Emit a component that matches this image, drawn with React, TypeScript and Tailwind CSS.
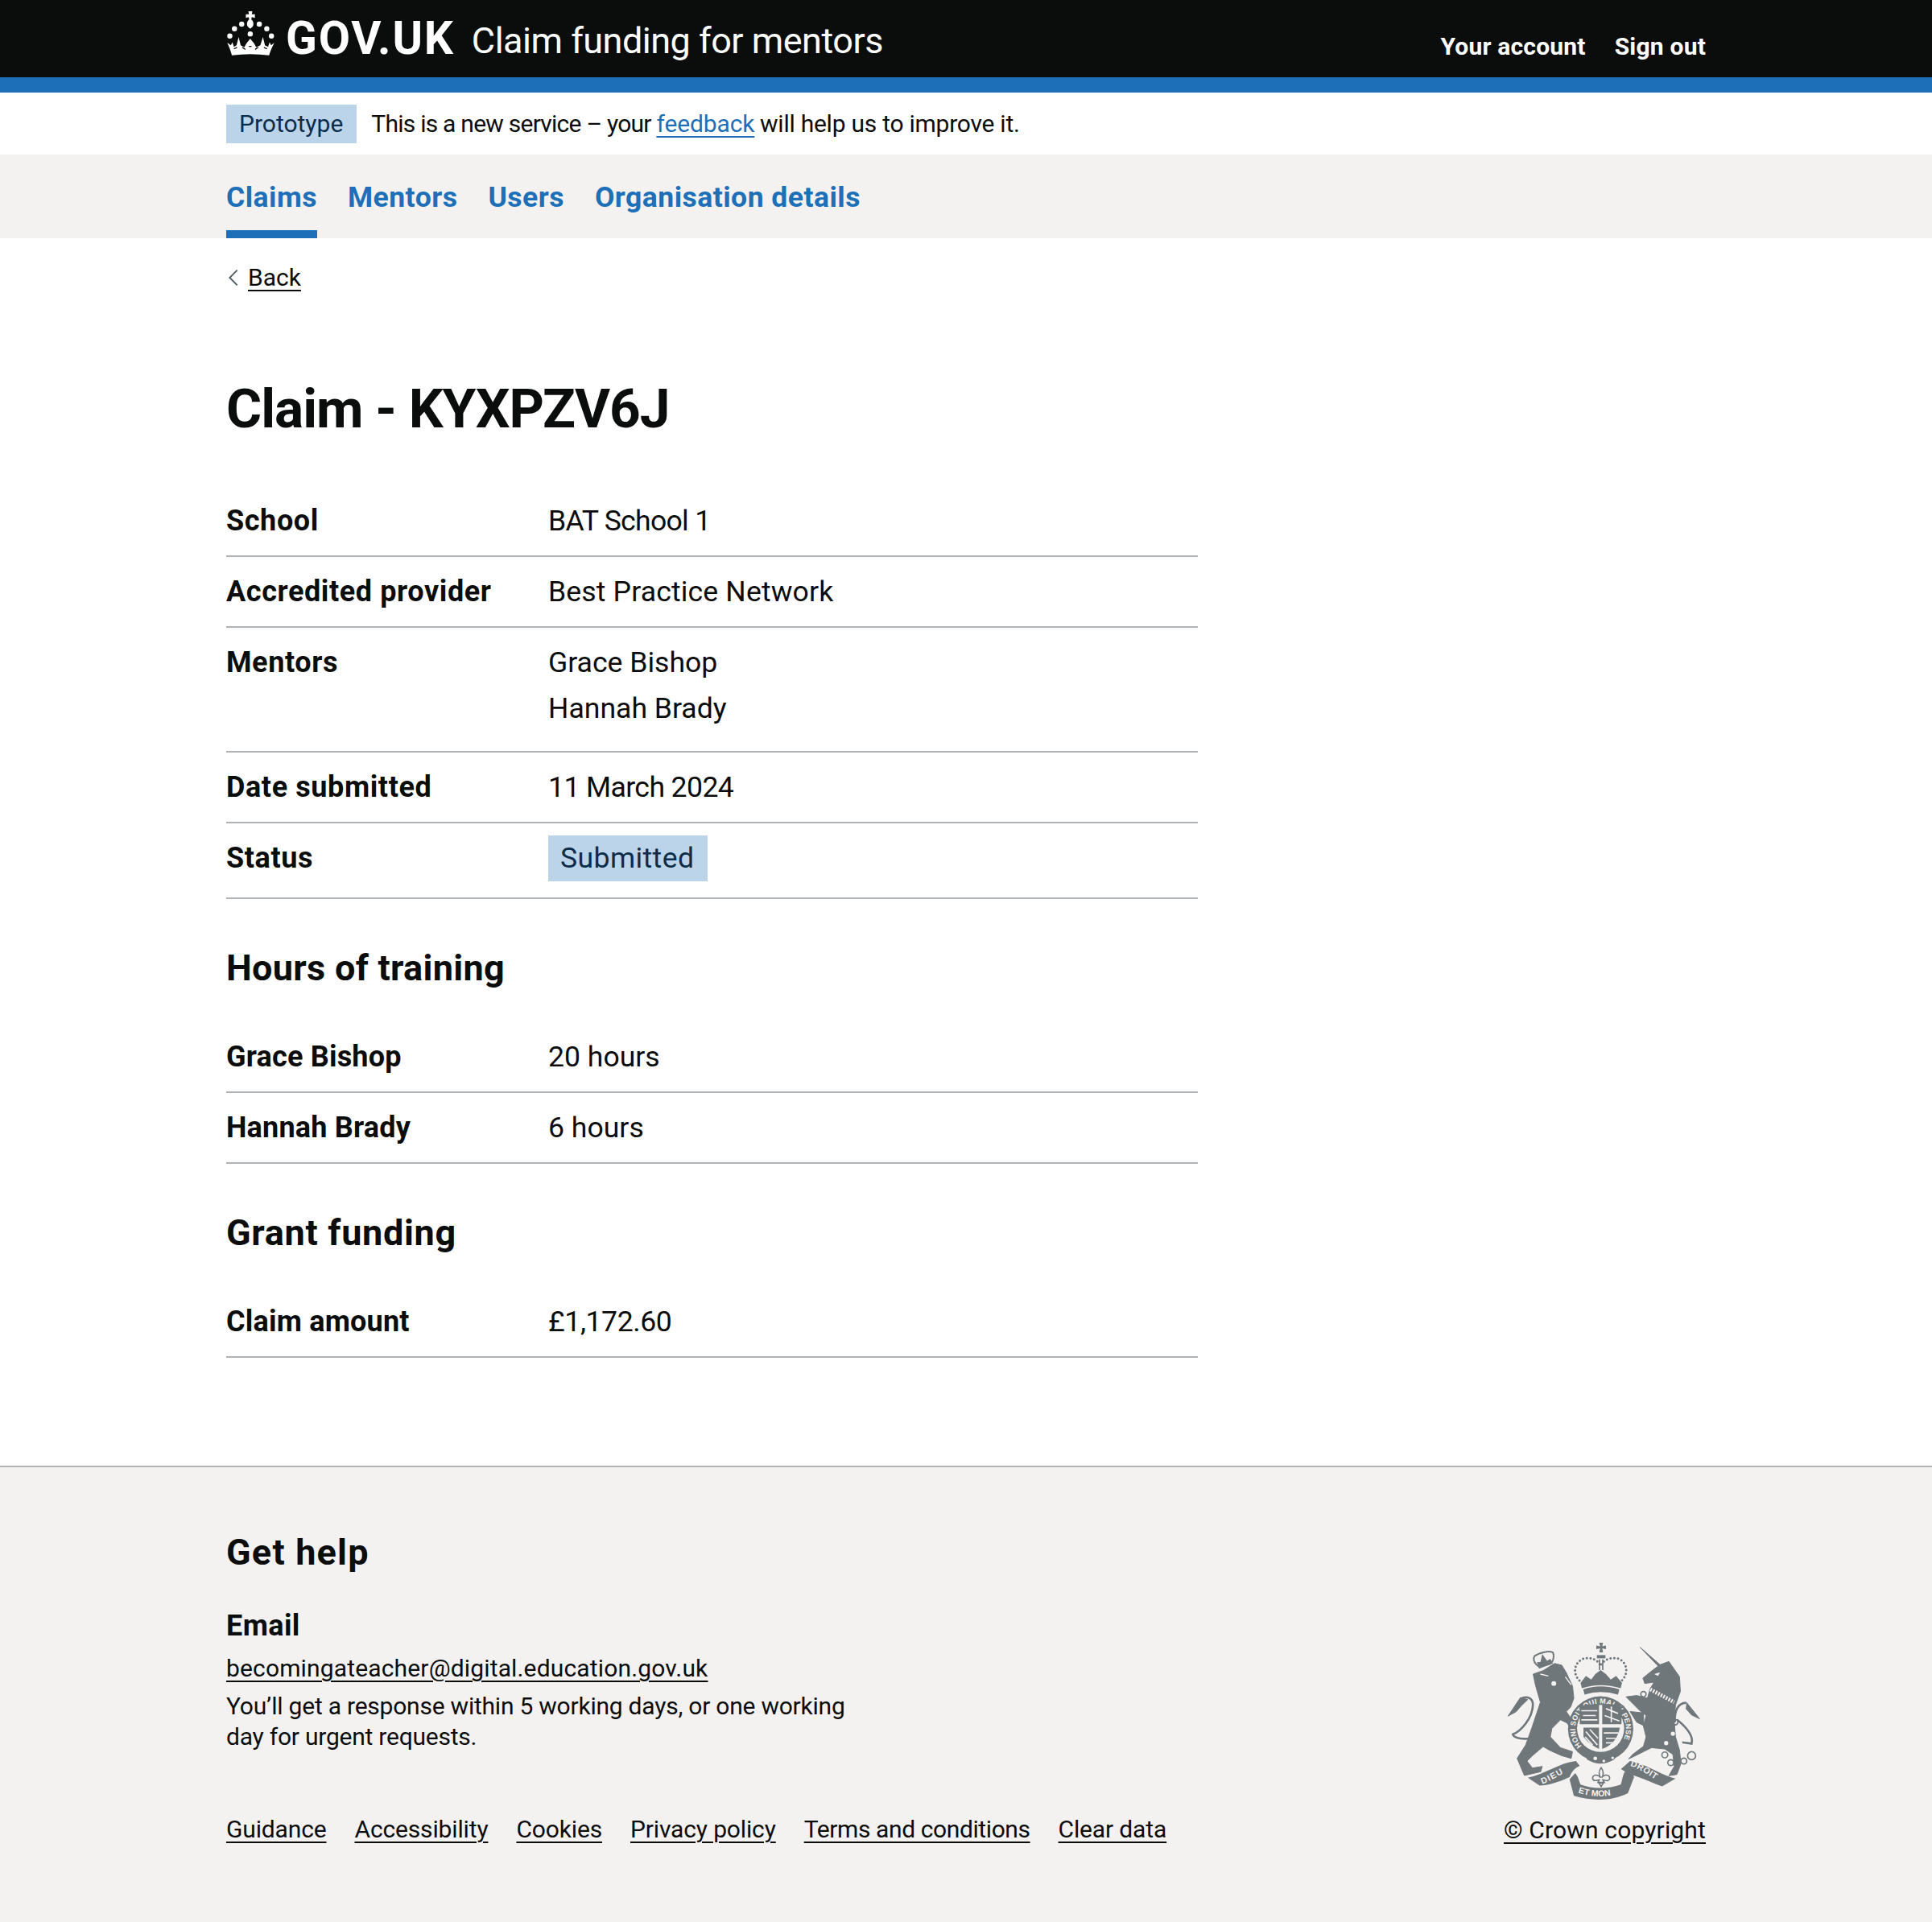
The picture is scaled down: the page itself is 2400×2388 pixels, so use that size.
const rowClass = 'flex border-b-2 border-[#b1b4b6] py-[19.5px] text-[35.6px] leading-[47px]';

function Crown() {
  return (
    <svg viewBox="30 38 190 176" className="w-[61px] h-[57px] mr-[13px] self-start mt-[-4px]" fill="currentColor">
      <path d="M116 40 H131 L129 52 H141 V66 L129 63 L127 72 C136 78 138 92 132 100 L123 108 L114 100 C108 92 110 78 119 72 L117 63 L106 66 V52 L118 52 Z" />
      <circle cx="90" cy="90" r="10" />
      <circle cx="158" cy="90" r="10" />
      <circle cx="62" cy="108" r="10" />
      <circle cx="187" cy="108" r="10" />
      <circle cx="44" cy="136" r="10" />
      <circle cx="205" cy="136" r="10" />
      <circle cx="123" cy="128" r="10" />
      <path d="M34 162 L48 172 L54 160 L60 178 L70 172 L78 140 L86 172 L100 180 L108 165 L123 146 L138 165 L146 180 L162 172 L172 140 L180 172 L192 178 L198 160 L204 172 L216 162 C208 180 200 195 196 211 Q123 201 52 211 C48 195 42 180 34 162 Z" />
      <path d="M60 186 L72 180 M92 180 L104 188 M142 188 L154 180 M176 180 L188 186 M118 176 L128 176" stroke="#0b0c0c" strokeWidth="4" fill="none" />
    </svg>
  );
}

// royal arms, traced by hand from the 3x crop
function RoyalArms() {
  const ink = '#6f777b';
  const paper = '#f3f2f1';
  return (
    <svg viewBox="100 85 725 595" className="w-[241px] h-[198px]">
      <defs>
        <path id="garter" d="M386 480 A95 95 0 1 1 514 480" />
        <path id="motto-left" d="M232 616 C275 600 305 575 345 560" />
        <path id="motto-mid" d="M366 648 C420 668 490 668 536 640" />
        <path id="motto-right" d="M560 548 C600 560 640 590 680 616" />
      </defs>

      {/* lion */}
      <g fill={ink} stroke={ink} strokeWidth="3" strokeLinejoin="round">
        <path d="M198 205 L235 192 L278 165 L305 172 L322 200 L345 250 L350 295 L338 328 L322 345 L355 395 L365 428 L345 422 L325 388 L300 376 L268 408 L262 440 L300 480 L345 495 L340 520 L305 510 L260 490 L235 476 L195 510 L175 530 L195 556 L232 550 L226 570 L165 584 L138 520 L170 470 L195 400 L225 310 L213 270 L205 240 Z" />
        <path d="M150 293 L104 362 L135 345 L152 325 L178 300 Z" />
      </g>
      <path d="M192 445 C160 450 125 445 122 430 C150 420 195 372 197 320 C197 292 172 285 150 298" fill="none" stroke={ink} strokeWidth="8" />
      <circle cx="275" cy="240" r="9" fill={paper} />
      <path d="M225 205 L255 212 M318 215 L340 245" stroke={paper} strokeWidth="4" />
      {/* lion crown */}
      <path d="M222 178 C205 170 195 150 203 138 C220 125 262 115 272 125 C278 140 272 160 262 166 Z" fill="none" stroke={ink} strokeWidth="7" strokeDasharray="2 6" strokeLinecap="round" />
      <path d="M220 185 L272 165 L262 148 L250 155 L232 130 L225 160 L212 160 Z" fill={ink} />

      {/* unicorn */}
      <g fill={ink} stroke={ink} strokeWidth="3" strokeLinejoin="round">
        <path d="M598 105 L672 170 L705 158 L745 215 L748 270 L730 320 L725 380 L730 440 L745 490 L750 540 L735 580 L705 585 L725 550 L720 505 L690 485 L640 480 L590 505 L555 522 L570 505 L610 475 L620 440 L610 400 L620 360 L600 345 L575 320 L545 290 L585 285 L625 295 L635 260 L650 235 L615 240 L608 220 L645 190 L665 175 Z" />
        <path d="M560 345 L610 350 L612 398 L585 385 Z" />
        <path d="M772 312 L820 372 L790 358 L770 335 Z" />
      </g>
      <path d="M728 385 C725 350 735 312 770 312 M735 375 C760 395 800 430 790 465 L755 460" fill="none" stroke={ink} strokeWidth="8" />
      <path d="M636 262 L725 310" stroke={paper} strokeWidth="14" strokeDasharray="6 5" />
      <g fill={paper}>
        <circle cx="720" cy="428" r="8" />
        <circle cx="695" cy="463" r="8" />
        <path d="M650 205 L672 198 L665 212 Z" />
      </g>
      <g fill="none" stroke={ink} strokeWidth="5">
        <circle cx="690" cy="507" r="11" />
        <circle cx="712" cy="536" r="11" />
        <circle cx="761" cy="530" r="11" />
        <circle cx="790" cy="510" r="15" />
        <circle cx="729" cy="385" r="10" />
        <circle cx="610" cy="280" r="10" />
      </g>

      {/* garter and shield */}
      <circle cx="450" cy="410" r="122" fill={ink} />
      <text fontFamily="Liberation Sans, sans-serif" fontSize="27" fontWeight="700" fill={paper} letterSpacing="1">
        <textPath href="#garter" startOffset="2%">HONI SOIT QUI MAL Y PENSE</textPath>
      </text>
      <circle cx="450" cy="408" r="88" fill={paper} />
      <g fill={ink}>
        <path d="M372 392 L372 326 Q410 312 444 320 L444 392 Z" />
        <path d="M456 320 Q495 312 528 326 L528 392 L456 392 Z" />
        <path d="M386 405 L444 405 L444 485 Q410 470 386 440 Z" />
        <path d="M456 405 L522 405 Q510 465 456 485 Z" />
      </g>
      <g stroke={paper} strokeWidth="5" fill="none">
        <path d="M378 342 L438 342 M384 360 L432 360 M378 376 L438 376" />
        <path d="M470 334 L515 352 M465 360 L520 380 M490 326 L490 385" />
        <path d="M395 420 L438 470 M410 412 L440 445 M392 440 L420 470" />
        <path d="M462 425 L516 425 M470 445 L506 445 M470 462 L495 462" />
      </g>
      <path d="M385 500 Q450 560 520 500 L500 525 Q450 555 400 525 Z" fill={ink} />
      <g fill={paper}>
        <circle cx="430" cy="520" r="7" />
        <circle cx="462" cy="530" r="5" />
        <circle cx="495" cy="518" r="5" />
      </g>

      {/* crown */}
      <path d="M382 238 C345 215 345 165 385 148 C410 140 440 150 450 175 C460 150 490 140 518 148 C555 165 555 215 518 238" fill="none" stroke={ink} strokeWidth="9" strokeDasharray="0 14" strokeLinecap="round" />
      <path d="M375 238 L395 212 L415 225 L430 205 L450 190 L470 205 L488 225 L508 212 L530 238 L525 258 Q450 235 380 258 Z" fill={ink} />
      <path d="M385 262 Q450 240 520 262 L515 282 Q450 262 390 282 Z" fill={ink} />
      <path d="M446 150 L446 190 M458 150 L458 190" stroke={ink} strokeWidth="5" />
      <path d="M445 88 L459 88 L456 101 L470 98 L470 112 L456 109 L459 124 L445 124 L448 109 L434 112 L434 98 L448 101 Z" fill={ink} />
      <rect x="436" y="134" width="32" height="12" fill={ink} />

      {/* motto ribbon */}
      <g fill={ink}>
        <path d="M178 592 L222 622 C275 618 310 600 334 590 C345 565 355 555 372 548 L358 530 C300 535 240 580 178 592 Z" />
        <path d="M334 598 L350 660 C420 680 490 680 552 650 L575 590 C570 575 555 568 540 570 C530 590 530 610 525 618 C480 635 420 635 375 618 C370 605 365 585 355 575 Z" />
        <path d="M526 560 L560 530 C620 540 680 585 730 595 L680 625 C640 610 600 590 560 580 Z" />
      </g>
      <g fontFamily="Liberation Sans, sans-serif" fontSize="32" fontWeight="700" fill={paper}>
        <text><textPath href="#motto-left" letterSpacing="4">DIEU</textPath></text>
        <text><textPath href="#motto-mid">ET MON</textPath></text>
        <text><textPath href="#motto-right" letterSpacing="2">DROIT</textPath></text>
      </g>
      {/* fleur de lis */}
      <path d="M452 555 C440 570 445 585 450 592 C440 578 420 580 420 595 C425 610 440 600 445 600 L440 610 L464 610 L458 600 C465 600 480 610 484 595 C484 580 462 578 454 592 C460 585 464 570 452 555 Z M444 612 L460 612 L452 625 Z" fill="none" stroke={ink} strokeWidth="5" />
    </svg>
  );
}

function Row({ label, children, className, labelClass }: { label: string; children: React.ReactNode; className?: string; labelClass?: string }) {
  return (
    <div className={className ?? rowClass}>
      <div className={`w-[400px] shrink-0 font-bold text-[36px] ${labelClass ?? 'tracking-[0.6px]'}`}>{label}</div>
      <div>{children}</div>
    </div>
  );
}

export default function App() {
  return (
    <div className="min-h-[2388px] bg-white text-[#0b0c0c] font-['Roboto',sans-serif] flex flex-col">
      {/* Header */}
      <header className="bg-[#0b0c0c] text-white">
        <div className="h-[96px] px-[281px] flex items-center justify-between">
          <div className="flex items-center">
            <Crown />
            <span className="text-[57px] leading-[56px] font-bold tracking-[1.8px]">GOV.UK</span>
            <span className="text-[45px] leading-[56px] ml-[21px] mt-[6px] tracking-[-0.5px]">Claim funding for mentors</span>
          </div>
          <nav className="flex gap-[36px] text-[30px] font-bold mt-[18px] tracking-[0.2px]">
            <a>Your account</a>
            <a>Sign out</a>
          </nav>
        </div>
        <div className="h-[19px] bg-[#1d70b8]" />
      </header>

      {/* Phase banner */}
      <div className="h-[77px] px-[281px] flex items-center text-[30px]">
        <strong className="bg-[#bbd4ea] text-[#0c2d4a] font-normal h-[48px] pl-[16px] pr-[17px] flex items-center mr-[18px]">Prototype</strong>
        <span className="tracking-[-0.76px]">
          This is a new service – your <a className="tracking-[-0.12px] text-[#1d70b8] underline underline-offset-[5px] decoration-2">feedback</a> <span className="tracking-[-0.25px]">will help us to improve it.</span>
        </span>
      </div>

      {/* Nav */}
      <nav className="h-[104px] bg-[#f3f2f1] px-[281px] flex gap-[38px] text-[35.6px] font-bold text-[#1d70b8] tracking-[0.45px]">
        <a className="pt-[27px] border-b-[10px] border-[#1d70b8]">Claims</a>
        <a className="pt-[27px]">Mentors</a>
        <a className="pt-[27px]">Users</a>
        <a className="pt-[27px]">Organisation details</a>
      </nav>

      {/* Main */}
      <main className="px-[281px] flex-1">
        <div className="pt-[29px] flex items-center text-[30px] leading-[40px]">
          <svg viewBox="0 0 12 20" className="w-[14px] h-[24px] mr-[11px] ml-[2px]" fill="none" stroke="#505a5f" strokeWidth="1.6">
            <path d="M10 2 L2 10 L10 18" />
          </svg>
          <a className="underline underline-offset-[5px] decoration-2">Back</a>
        </div>

        <h1 className="mt-[105px] text-[67.5px] leading-[75px] font-bold tracking-[-1px]">Claim - KYXPZV6J</h1>

        <div className="w-[1207px] mt-[59px]">
          <Row label="School"><span className="tracking-[-0.7px]">BAT School 1</span></Row>
          <Row label="Accredited provider"><span className="tracking-[0.15px]">Best Practice Network</span></Row>
          <Row label="Mentors">
            <p className="mb-[10px]">Grace Bishop</p>
            <p className="mb-[10px]">Hannah Brady</p>
          </Row>
          <Row label="Date submitted"><span className="tracking-[-0.6px]">11 March 2024</span></Row>
          <Row label="Status" className="flex items-center border-b-2 border-[#b1b4b6] pt-[15px] pb-[20px] text-[35.6px] leading-[47px]">
            <span className="block bg-[#bbd4ea] text-[#0c2d4a] pl-[15px] pr-[17px] py-[5px] h-[57px] tracking-[0.4px]">Submitted</span>
          </Row>

          <h2 className="mt-[58px] mb-[39px] text-[45px] leading-[56px] font-bold tracking-[0.3px]">Hours of training</h2>
          <Row label="Grace Bishop" labelClass="tracking-[0.2px]">20 hours</Row>
          <Row label="Hannah Brady" labelClass="tracking-[0.2px]">6 hours</Row>

          <h2 className="mt-[58px] mb-[39px] text-[45px] leading-[56px] font-bold tracking-[0.7px]">Grant funding</h2>
          <Row label="Claim amount" labelClass="tracking-[0.2px]"><span className="tracking-[-0.4px]">£1,172.60</span></Row>
        </div>
      </main>

      {/* Footer */}
      <footer className="h-[567px] border-t-2 border-[#b1b4b6] bg-[#f3f2f1] px-[281px] flex justify-between">
        <div>
          <h2 className="mt-[78px] text-[45px] leading-[56px] font-bold tracking-[1.2px]">Get help</h2>
          <h3 className="mt-[40px] text-[36px] leading-[47px] font-bold tracking-[0.4px]">Email</h3>
          <a className="block mt-[9px] text-[30px] leading-[40px] underline underline-offset-[5px] decoration-2 tracking-[0.15px]">becomingateacher@digital.education.gov.uk</a>
          <p className="mt-[8px] w-[800px] text-[30px] leading-[38px] tracking-[-0.23px]">You’ll get a response within 5 working days, or one working day for urgent requests.</p>
          <ul className="mt-[76px] flex gap-[35px] text-[30px] leading-[40px] underline underline-offset-[5px] decoration-2 tracking-[-0.15px]">
            <li>Guidance</li>
            <li>Accessibility</li>
            <li>Cookies</li>
            <li>Privacy policy</li>
            <li className="tracking-[-0.4px]">Terms and conditions</li>
            <li>Clear data</li>
          </ul>
        </div>
        <div className="flex flex-col items-end">
          <div className="mt-[217px] mr-[6px]">
            <RoyalArms />
          </div>
          <a className="mt-[16px] text-[30px] leading-[40px] underline underline-offset-[5px] decoration-2 tracking-[0.15px]">© Crown copyright</a>
        </div>
      </footer>
    </div>
  );
}
